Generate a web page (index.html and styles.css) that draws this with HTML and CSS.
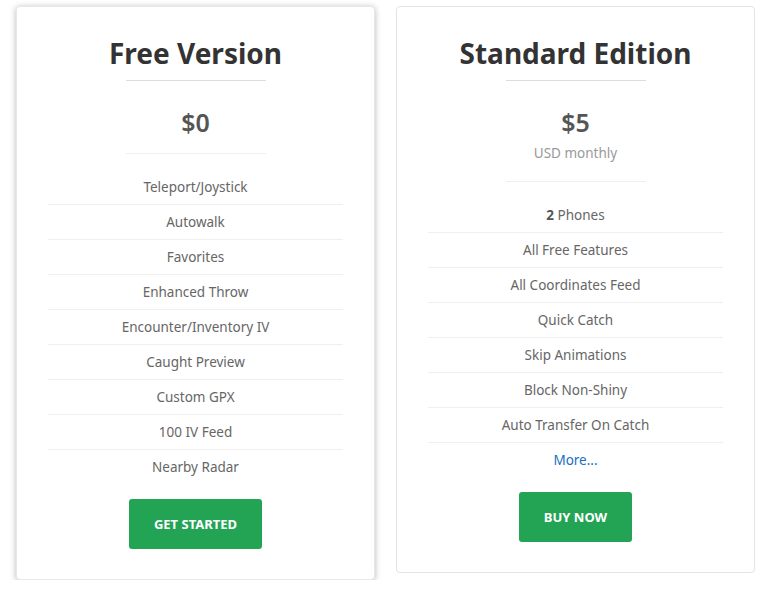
FILE: index.html
```html
<!DOCTYPE html>
<html>
<head>
<meta charset="utf-8">
<link rel="stylesheet" href="styles.css">
</head>
<body>
<div class="plans">
  <div class="card card-active">
    <h2 class="title">Free Version</h2>
    <hr class="rule">
    <div class="price">$0</div>
    <hr class="rule rule-light">
    <ul class="features">
      <li>Teleport/Joystick</li>
      <li>Autowalk</li>
      <li>Favorites</li>
      <li>Enhanced Throw</li>
      <li>Encounter/Inventory IV</li>
      <li>Caught Preview</li>
      <li>Custom GPX</li>
      <li>100 IV Feed</li>
      <li>Nearby Radar</li>
    </ul>
    <a class="btn">GET STARTED</a>
  </div>
  <div class="card">
    <h2 class="title">Standard Edition</h2>
    <hr class="rule">
    <div class="price">$5</div>
    <div class="period">USD monthly</div>
    <hr class="rule rule-light rule-period">
    <ul class="features">
      <li><b>2</b> Phones</li>
      <li>All Free Features</li>
      <li>All Coordinates Feed</li>
      <li>Quick Catch</li>
      <li>Skip Animations</li>
      <li>Block Non-Shiny</li>
      <li>Auto Transfer On Catch</li>
      <li><a class="more">More...</a></li>
    </ul>
    <a class="btn">BUY NOW</a>
  </div>
</div>
</body>
</html>
```
FILE: styles.css
```css
html, body {
  margin: 0;
  padding: 0;
  background: #fff;
  font-family: "Noto Sans", "Open Sans", sans-serif;
}
.plans {
  display: flex;
  align-items: flex-start;
  gap: 21px;
  padding: 6px 0 0 16px;
}
.card {
  box-sizing: border-box;
  width: 359px;
  border: 1px solid #e3e3e3;
  border-radius: 4px;
  background: #fff;
  padding: 29px 31px 30px;
  display: flex;
  flex-direction: column;
  align-items: center;
  text-align: center;
}
.card-active {
  border-color: #e8e8e8;
  box-shadow: 0 1px 6px rgba(0, 0, 0, 0.28);
}
.title {
  margin: 0;
  font-size: 28px;
  line-height: 34px;
  font-weight: 700;
  color: #333;
}
.rule {
  width: 140px;
  border: 0;
  border-top: 1px solid #dcdcdc;
  margin: 10px 0 0;
  height: 0;
}
.rule-light {
  border-top-color: #efefef;
  margin-top: 15px;
}
.rule-period {
  margin-top: 18px;
}
.price {
  margin-top: 25px;
  font-size: 25px;
  line-height: 32px;
  font-weight: 600;
  color: #555;
}
.period {
  margin-top: 5px;
  font-size: 13.5px;
  line-height: 20px;
  color: #999;
}
.features {
  list-style: none;
  margin: 16px 0 0;
  padding: 0;
  align-self: stretch;
}
.features li {
  height: 34px;
  line-height: 34px;
  border-bottom: 1px solid #efefef;
  font-size: 13.5px;
  color: #666;
}
.features li:last-child {
  border-bottom: 0;
}
.features b {
  color: #555;
}
.more {
  color: #1a6fbd;
  text-decoration: none;
}
.btn {
  margin-top: 15px;
  display: block;
  height: 50px;
  line-height: 50px;
  padding: 0 25px;
  border-radius: 3px;
  background: #23a455;
  color: #fff;
  font-size: 13px;
  font-weight: 700;
  text-decoration: none;
}
```
